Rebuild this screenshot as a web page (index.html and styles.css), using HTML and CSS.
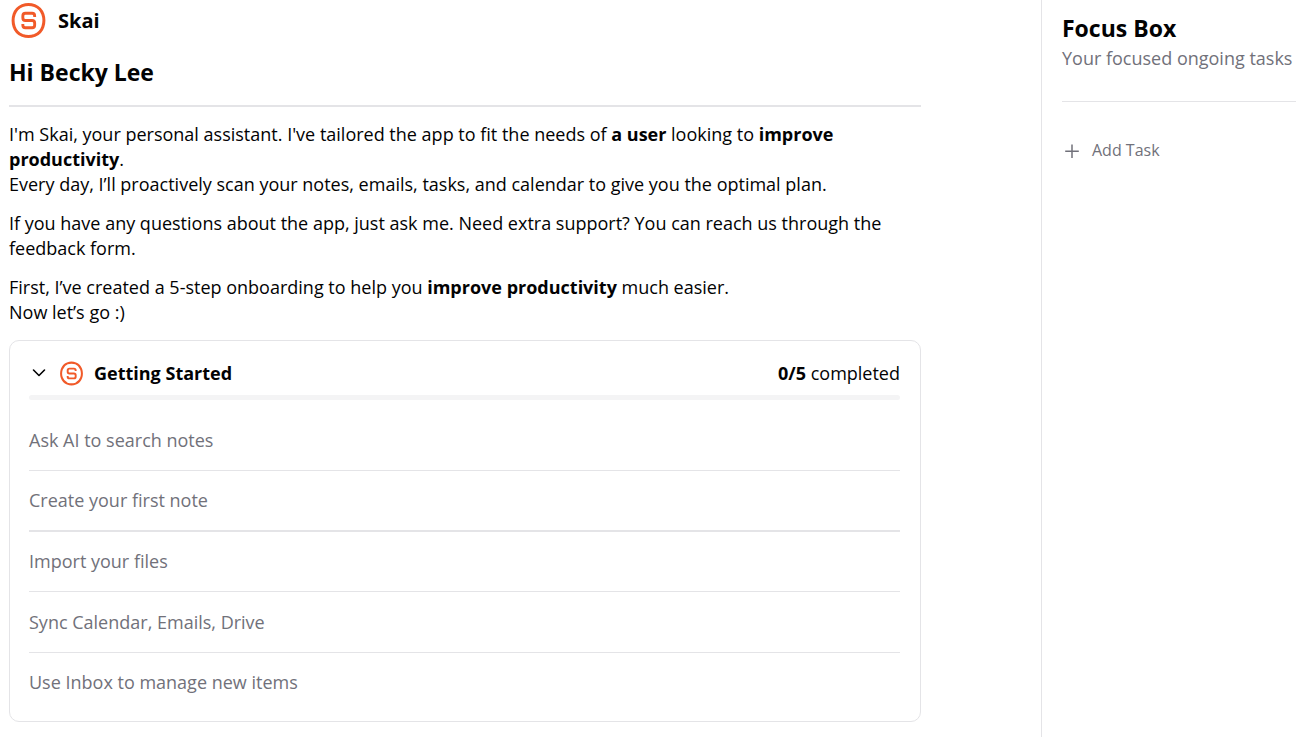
FILE: index.html
```html
<!DOCTYPE html>
<html lang="en">
<head>
<meta charset="utf-8">
<meta name="viewport" content="width=device-width, initial-scale=1">
<title>Skai</title>
<link rel="stylesheet" href="styles.css">
</head>
<body>
<svg class="defs" aria-hidden="true">
  <symbol id="skai-logo" viewBox="0 0 36 36">
    <path d="M12 3.500Q18 1.200 24 3.500Q30 6 32 12Q34 18 32 24Q30 30 24 32.500Q18 34.800 12 32.500Q6 30 4 24Q2 18 4 12Q6 6 12 3.500Z" fill="none" stroke="currentColor" stroke-width="2.900"/>
    <path d="M24 14.500V13.500Q24 11 21.500 11H15Q12.500 11 12.500 13.500V15.500Q12.500 18 15 18H21.500Q24 18 24 20.500V22.500Q24 25 21.500 25H15Q12.500 25 12.500 22.500V21.500" fill="none" stroke="currentColor" stroke-width="2.800"/>
  </symbol>
</svg>
<div class="app">
  <main class="main">
    <header class="brand">
      <svg class="brand-logo"><use href="#skai-logo"/></svg>
      <span class="brand-name">Skai</span>
    </header>
    <h1 class="greeting">Hi Becky Lee</h1>
    <div class="intro">
      <p>I'm Skai, your personal assistant. I've tailored the app to fit the needs of <b>a user</b> looking to <b>improve productivity</b>.<br>Every day, I’ll proactively scan your notes, emails, tasks, and calendar to give you the optimal plan.</p>
      <p>If you have any questions about the app, just ask me. Need extra support? You can reach us through the feedback form.</p>
      <p>First, I’ve created a 5-step onboarding to help you <b>improve productivity</b> much easier.<br>Now let’s go :)</p>
    </div>
    <section class="card">
      <div class="card-head">
        <button class="toggle" type="button" aria-expanded="true">
          <svg class="chevron" viewBox="0 0 20 20"><path d="M4.500 7 10 12.500 15.500 7" fill="none" stroke="currentColor" stroke-width="1.600" stroke-linecap="round" stroke-linejoin="round"/></svg>
          <svg class="card-logo"><use href="#skai-logo"/></svg>
          <span>Getting Started</span>
        </button>
        <span class="count"><b>0/5</b> completed</span>
      </div>
      <div class="track" role="progressbar" aria-label="Onboarding" aria-valuemin="0" aria-valuemax="5" aria-valuenow="0"></div>
      <ul class="steps">
        <li><button type="button">Ask AI to search notes</button></li>
        <li><button type="button">Create your first note</button></li>
        <li><button type="button">Import your files</button></li>
        <li><button type="button">Sync Calendar, Emails, Drive</button></li>
        <li><button type="button">Use Inbox to manage new items</button></li>
      </ul>
    </section>
  </main>
  <aside class="focus">
    <div class="focus-head">
      <h2>Focus Box</h2>
      <p>Your focused ongoing tasks</p>
    </div>
    <button class="add" type="button">
      <svg class="plus" viewBox="0 0 20 20"><path d="M10 3.500V17M3.200 10.200H16.800" fill="none" stroke="currentColor" stroke-width="1.500"/></svg>
      <span>Add Task</span>
    </button>
  </aside>
</div>
</body>
</html>
```
FILE: styles.css
```css
* { box-sizing: border-box; }
body {
  margin: 0;
  background: #fff;
  color: #020203;
  font-family: "Open Sans", "Noto Sans", sans-serif;
  font-size: 18px;
  line-height: 25px;
}
h1, h2, p, ul { margin: 0; padding: 0; }
button {
  border: 0;
  padding: 0;
  background: none;
  color: inherit;
  font: inherit;
  text-align: left;
  cursor: pointer;
}
b { font-weight: 700; }
.defs { position: absolute; width: 0; height: 0; }
.app { display: flex; min-height: 100vh; }
.main { flex: 1; min-width: 0; padding: 0 120px 14px 9px; }
.brand { display: flex; align-items: center; gap: 11px; height: 41px; padding-left: 1px; }
.brand-logo { width: 37px; height: 37px; color: #f15a29; }
.brand-name { font-size: 20px; font-weight: 700; }
.greeting {
  padding: 15px 0 17px;
  border-bottom: 2px solid #e4e4e7;
  font-size: 23px;
  font-weight: 700;
  line-height: 32px;
}
.intro { display: grid; gap: 14px; padding: 15px 0; }
.card { padding: 19px 20px 9px 19px; border: 1px solid #e4e4e7; border-radius: 10px; }
.card-head { display: flex; align-items: center; justify-content: space-between; height: 26px; }
.toggle { display: flex; align-items: center; gap: 10px; font-weight: 700; }
.chevron { width: 20px; height: 20px; }
.card-logo { width: 25px; height: 25px; color: #f15a29; }
.track { height: 5px; margin-top: 9px; border-radius: 3px; background: #f4f4f5; }
.steps { padding-top: 10px; list-style: none; color: #71717a; }
.steps li + li { border-top: 1px solid #e4e4e7; }
.steps li:nth-child(3) { border-top-width: 2px; }
.steps button { display: block; width: 100%; height: 60px; }
.steps li:nth-child(n + 2) button { height: 59px; }
.steps li:nth-child(4) button { height: 60px; }
.focus { flex: 0 0 255px; padding: 12px 0 0 20px; border-left: 1px solid #e4e4e7; color: #71717a; }
.focus-head { padding-bottom: 30px; border-bottom: 1px solid #e4e4e7; white-space: nowrap; }
.focus h2 { padding-bottom: 2px; color: #020203; font-size: 23px; font-weight: 700; line-height: 32px; }
.add { display: flex; align-items: center; gap: 10px; margin-top: 36px; font-size: 16px; }
.plus { width: 20px; height: 20px; }
```
